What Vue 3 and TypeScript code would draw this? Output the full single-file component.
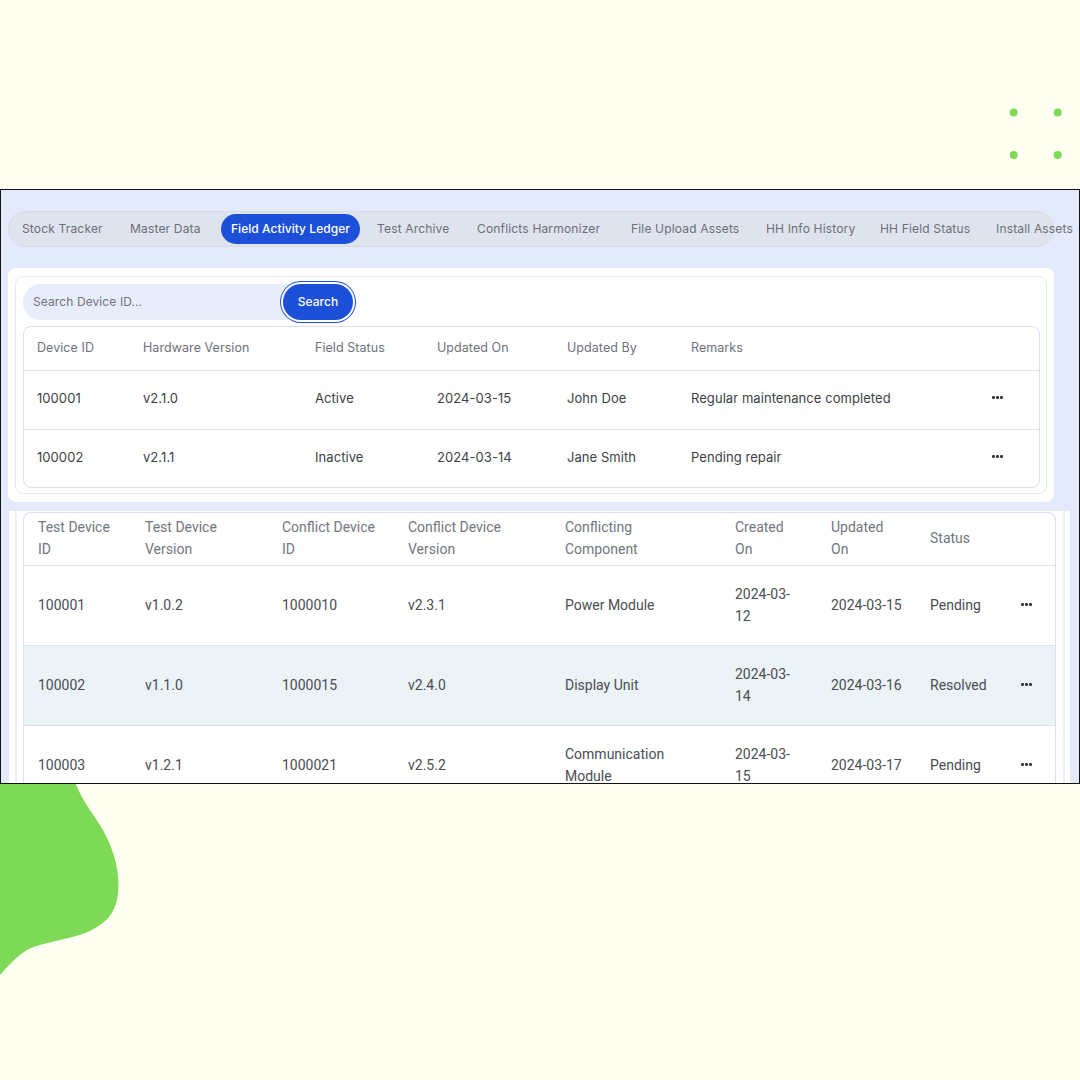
<script setup lang="ts">
const tabs = [
  { label: 'Stock Tracker', cls: 't1' },
  { label: 'Master Data', cls: 't2' },
  { label: 'Field Activity Ledger', cls: 'active' },
  { label: 'Test Archive', cls: 't4' },
  { label: 'Conflicts Harmonizer', cls: 't5' },
  { label: 'File Upload Assets', cls: 't6' },
  { label: 'HH Info History', cls: 't7' },
  { label: 'HH Field Status', cls: 't8' },
  { label: 'Install Assets', cls: 't9' },
]
const topHead = ['Device ID', 'Hardware Version', 'Field Status', 'Updated On', 'Updated By', 'Remarks', '']
const topRows = [
  ['100001', 'v2.1.0', 'Active', '2024-03-15', 'John Doe', 'Regular maintenance completed'],
  ['100002', 'v2.1.1', 'Inactive', '2024-03-14', 'Jane Smith', 'Pending repair'],
]
const bottomHead = ['Test Device ID', 'Test Device Version', 'Conflict Device ID', 'Conflict Device Version', 'Conflicting Component', 'Created On', 'Updated On', 'Status', '']
const bottomRows = [
  { cells: ['100001', 'v1.0.2', '1000010', 'v2.3.1', 'Power Module', '2024-03-12', '2024-03-15', 'Pending'], hl: false },
  { cells: ['100002', 'v1.1.0', '1000015', 'v2.4.0', 'Display Unit', '2024-03-14', '2024-03-16', 'Resolved'], hl: true },
  { cells: ['100003', 'v1.2.1', '1000021', 'v2.5.2', 'Communication Module', '2024-03-15', '2024-03-17', 'Pending'], hl: false },
]
</script>

<template>
  <div class="page">
    <svg class="decor" width="1080" height="1080" viewBox="0 0 1080 1080">
      <path d="M0 770 L71 770 C78 795 90 810 100 825 C112 845 118.500 865 118.500 885 C118.500 905 112 917 100 925 C88 934 72 937 60 940 C48 943 36 945 27 950 C16 957 8 966 0 975 Z" fill="#7ED957" />
      <circle cx="1013.7" cy="112.5" r="4" fill="#7ED957" />
      <circle cx="1057.7" cy="112.5" r="4" fill="#7ED957" />
      <circle cx="1013.7" cy="155" r="4" fill="#7ED957" />
      <circle cx="1057.7" cy="155" r="4" fill="#7ED957" />
    </svg>

    <div class="frame">
      <nav class="tabs">
        <span v-for="t in tabs" :key="t.label" class="tab" :class="t.cls">{{ t.label }}</span>
      </nav>

      <section class="panel">
        <div class="card">
          <div class="search">
            <div class="input">Search Device ID...</div>
            <button class="btn" type="button">Search</button>
          </div>
          <div class="table top-table">
            <div class="row top-row head">
              <div v-for="(h, i) in topHead" :key="i" class="cell">{{ h }}</div>
            </div>
            <div v-for="r in topRows" :key="r[0]" class="row top-row body">
              <div v-for="(c, i) in r" :key="i" class="cell">{{ c }}</div>
              <div class="cell dots"><i></i><i></i><i></i></div>
            </div>
          </div>
        </div>
      </section>

      <section class="lower">
        <div class="lower-inner">
          <div class="table low-table">
            <div class="row low-row head">
              <div v-for="(h, i) in bottomHead" :key="i" class="cell">{{ h }}</div>
            </div>
            <div v-for="r in bottomRows" :key="r.cells[0]" class="row low-row body" :class="{ hl: r.hl }">
              <div v-for="(c, i) in r.cells" :key="i" class="cell">{{ c }}</div>
              <div class="cell dots"><i></i><i></i><i></i></div>
            </div>
          </div>
        </div>
      </section>
    </div>
  </div>
</template>

<style>
html, body { margin: 0; padding: 0; background: #fffff2; }
</style>

<style scoped>
.page {
  position: relative;
  width: 1080px;
  height: 1080px;
  padding-top: 189px;
  box-sizing: border-box;
  background: #fffff2;
  overflow: hidden;
  font-family: "Inter", "Open Sans", sans-serif;
}
.decor { position: absolute; left: 0; top: 0; }
.frame {
  position: relative;
  box-sizing: border-box;
  height: 595px;
  border: 1px solid #111;
  background: #e3eafc;
  overflow: hidden;
  padding: 21px 0 0 7px;
}
.tabs {
  box-sizing: border-box;
  width: 1046px;
  height: 36px;
  border: 1px solid #d5dbea;
  border-radius: 18px;
  background: #dfe3ee;
  display: flex;
  align-items: center;
  padding: 0 0 1px 13px;
  white-space: nowrap;
  font-size: 12px;
  letter-spacing: 0.17px;
  color: #6b6f78;
}
.tab { display: block; flex: none; }
.t1 { width: 81px; margin-right: 27px; }
.t2 { width: 74px; margin-right: 17px; }
.active {
  box-sizing: border-box;
  width: 139px;
  height: 30px;
  line-height: 30px;
  text-align: center;
  border-radius: 15px;
  background: #1d50d8;
  color: #fff;
  font-weight: 500;
  letter-spacing: 0.05px;
  margin-right: 17px;
}
.t4 { width: 73px; margin-right: 27px; }
.t5 { width: 127px; margin-right: 27px; }
.t6 { width: 108px; margin-right: 27px; }
.t7 { width: 86px; margin-right: 28px; }
.t8 { width: 89px; margin-right: 27px; }
.t9 { width: 77px; }

.panel {
  box-sizing: border-box;
  width: 1046px;
  height: 234px;
  margin-top: 21px;
  padding: 8px 7px;
  background: #fff;
  border-radius: 8px;
}
.card {
  box-sizing: border-box;
  height: 218px;
  border: 1px solid #e4e9f5;
  border-radius: 8px;
  background: #fff;
  padding: 7px 7px 6px;
}
.search {
  display: flex;
  align-items: center;
  height: 36px;
  margin-bottom: 6px;
}
.input {
  box-sizing: border-box;
  width: 272px;
  height: 36px;
  line-height: 35px;
  padding-left: 10px;
  border-radius: 18px 0 0 18px;
  background: #e8edfc;
  color: #70747c;
  font-size: 12px;
  letter-spacing: 0.1px;
}
.btn {
  box-sizing: border-box;
  width: 70px;
  height: 36px;
  margin-left: -12px;
  padding: 0 0 2px;
  border: 0;
  border-radius: 18px;
  background: #1d50d8;
  color: #fff;
  font: 500 12px "Inter", sans-serif;
  box-shadow: 0 0 0 2px #fff, 0 0 0 3px #1d50d8;
}
.table {
  border: 1px solid #d9dfee;
  border-radius: 8px;
  background: #fff;
  overflow: hidden;
}
.top-table { width: 1017px; box-sizing: border-box; height: 162px; }
.row { display: grid; align-items: center; box-sizing: border-box; }
.row + .row { border-top: 1px solid #dfe4f0; }
.top-row { grid-template-columns: 106px 172px 122px 130px 124px 290px 1fr; }
.top-row .cell { padding-left: 13px; font-size: 13px; letter-spacing: 0.06px; color: #3c3f46; }
.top-row.head { height: 43px; padding-bottom: 2px; }
.top-row.head .cell { color: #6e727b; font-size: 12.5px; }
.top-row.body { height: 59px; padding-bottom: 5px; }
.top-row .dots { padding-left: 24px; }

.lower {
  box-sizing: border-box;
  width: 1061px;
  height: 272px;
  margin-top: 9px;
  margin-left: 1px;
  padding: 0 5px 0 6px;
  background: #fff;
}
.lower-inner {
  box-sizing: border-box;
  height: 100%;
  padding: 1px 7px 0 6px;
  background: #fff;
  border-left: 2px solid #eef1fc;
  border-right: 2px solid #eef1fc;
}
.low-table {
  box-sizing: border-box;
  width: 1033px;
  height: 290px;
  border-radius: 8px 8px 0 0;
  border-bottom: 0;
  font-family: "Roboto", "Inter", sans-serif;
}
.low-row { grid-template-columns: 107px 137px 126px 157px 170px 96px 99px 88px 1fr; }
.low-row .cell {
  padding-left: 14px;
  padding-right: 14px;
  font-size: 14px;
  line-height: 22px;
  color: #4a4d54;
}
.low-row.head { height: 52px; padding-bottom: 2px; }
.low-row.head .cell { color: #72767e; }
.low-row.head .cell:nth-child(5),
.low-row.head .cell:nth-child(6),
.low-row.head .cell:nth-child(7) { padding-right: 30px; }
.low-row.body .cell:nth-child(7) { white-space: nowrap; }
.low-row.body { height: 80px; padding-bottom: 2px; }
.low-row.hl { background: #ebf3f6; }
.low-row + .low-row { border-top: 1.5px solid #dde3ee; }
.low-row .dots { padding-left: 17px; }

.dots {
  display: flex;
  align-items: center;
  gap: 1.5px;
}
.dots i {
  display: block;
  width: 2.6px;
  height: 2.6px;
  border-radius: 50%;
  background: #33363c;
}
</style>
